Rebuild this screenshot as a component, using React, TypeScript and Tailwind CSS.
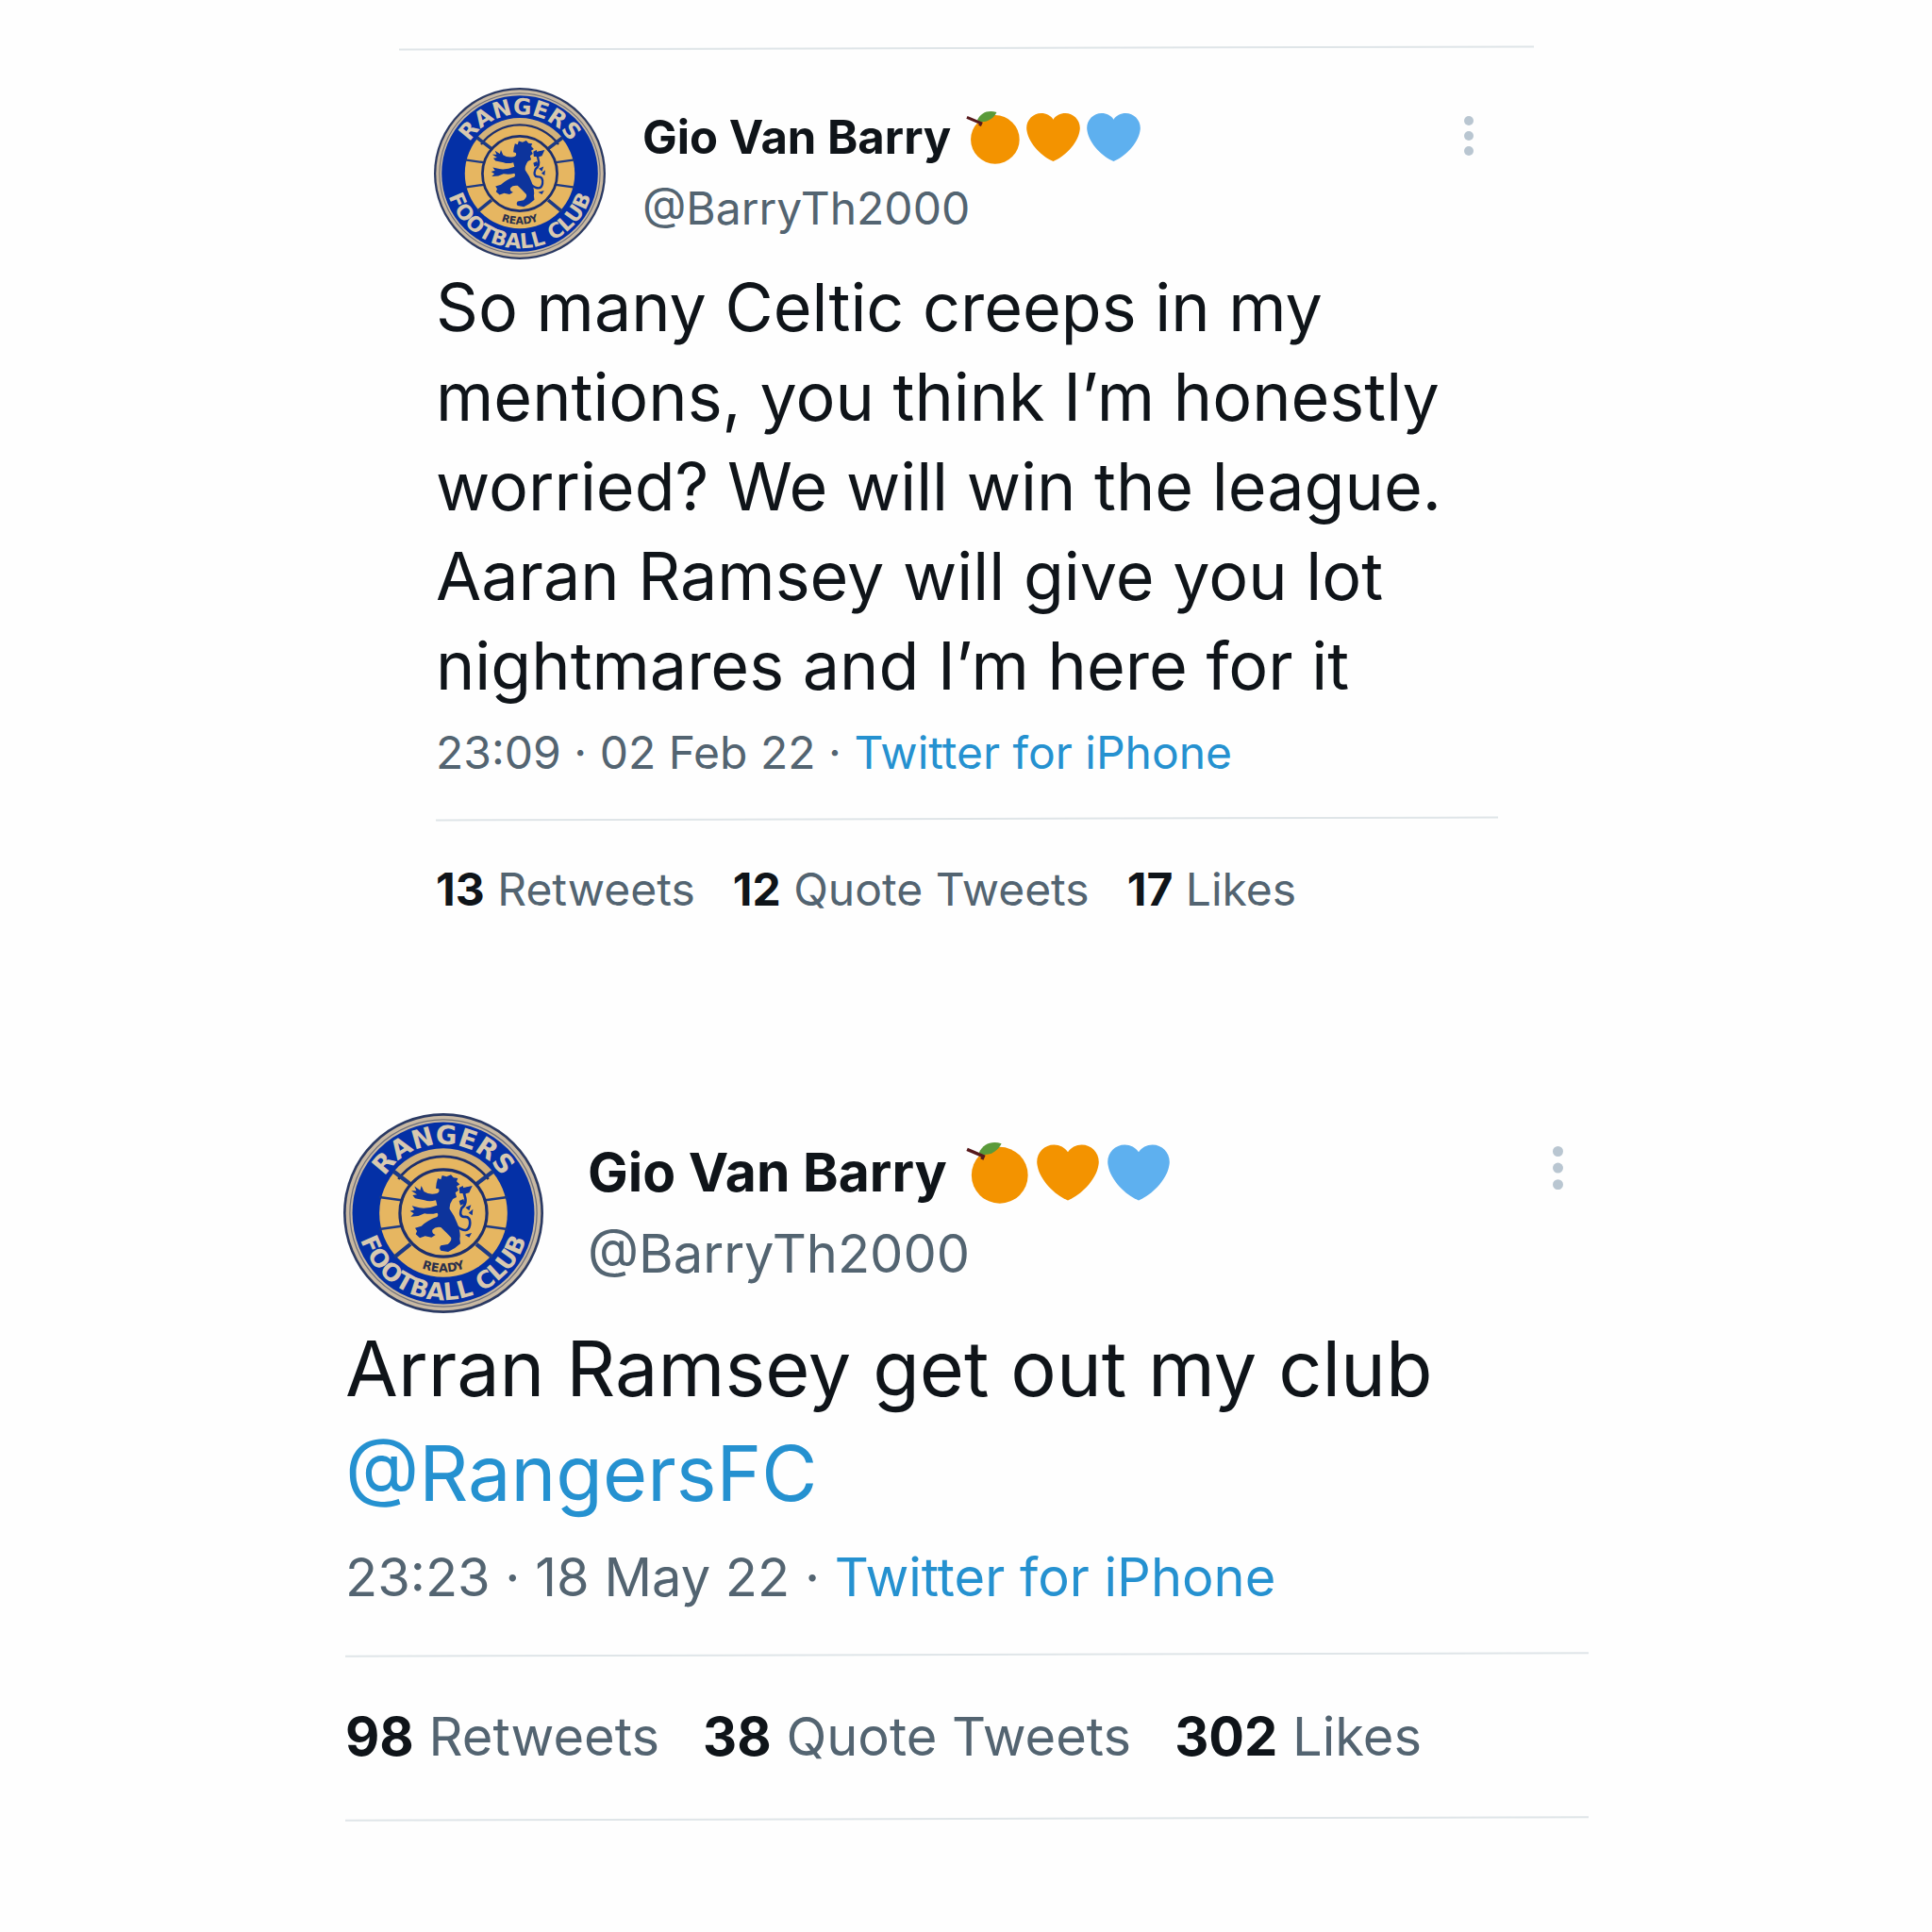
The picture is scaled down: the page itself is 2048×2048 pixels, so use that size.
import { useId } from 'react';
import clsx from 'clsx';

interface Tweet {
  name: string;
  handle: string;
  text: string[];
  mention?: string;
  time: string;
  source: string;
  stats: { count: number; label: string }[];
}

const tweets: Tweet[] = [
  {
    name: 'Gio Van Barry',
    handle: '@BarryTh2000',
    text: [
      'So many Celtic creeps in my',
      'mentions, you think I’m honestly',
      'worried? We will win the league.',
      'Aaran Ramsey will give you lot',
      'nightmares and I’m here for it',
    ],
    time: '23:09 · 02 Feb 22',
    source: 'Twitter for iPhone',
    stats: [
      { count: 13, label: 'Retweets' },
      { count: 12, label: 'Quote Tweets' },
      { count: 17, label: 'Likes' },
    ],
  },
  {
    name: 'Gio Van Barry',
    handle: '@BarryTh2000',
    text: ['Arran Ramsey get out my club'],
    mention: '@RangersFC',
    time: '23:23 · 18 May 22',
    source: 'Twitter for iPhone',
    stats: [
      { count: 98, label: 'Retweets' },
      { count: 38, label: 'Quote Tweets' },
      { count: 302, label: 'Likes' },
    ],
  },
];

function Crest({ className }: { className?: string }) {
  const id = useId();
  return (
    <svg viewBox="0 0 200 200" className={className} role="img" aria-label="Rangers Football Club">
      <defs>
        <path id={`${id}-top`} d="M31 100a69 69 0 0 1 138 0" />
        <path id={`${id}-bottom`} d="M13 100a87 87 0 0 0 174 0" />
        <path id={`${id}-motto`} d="M40 99a60 60 0 0 0 120 0" />
      </defs>

      {/* rim */}
      <circle cx="100" cy="100" r="100" fill="#2b3a63" />
      <circle cx="100" cy="100" r="97.5" fill="#c9b9a3" />
      <circle cx="100" cy="100" r="93.5" fill="none" stroke="#6f7079" strokeWidth="1.2" />
      <circle cx="100" cy="100" r="91" fill="#0430a6" />

      {/* ball panels */}
      <circle cx="100" cy="100" r="64" fill="#e6b661" />
      <path d="M54 59.500a61 61 0 0 1 92 0" fill="none" stroke="#d3b27a" strokeWidth="7" />
      <path d="M55 66a56 56 0 0 1 90 0" fill="none" stroke="#1c2f6e" strokeWidth="2.500" />
      <g stroke="#1c3a86" strokeWidth="2.500">
        <path d="M58 87l-22-3M142 87l22-3M58 113l-22 3M142 113l22 3" />
        <path d="M67 71L50 58M133 71l17-13M67 131l-16 13M133 131l16 13" strokeWidth="4" />
      </g>
      <circle cx="100" cy="100" r="43.500" fill="#e6b661" stroke="#1c2f6e" strokeWidth="3" />

      {/* lion rampant */}
      <g transform="translate(-13.200 -14.200) scale(.3145)" fill="#0d349c">
        <path d="M338 268l4-16 10 4 4-13 14 4 14-6 8 9 14 2-4 10 10 10-10 6 6 12-10 8 4 14-12 6q-12 17-10 32 16 22 24 45 12 30 8 50l2 15q-19 18-39 26l-23-4q-7-8 0-16l22-4q14-12 10-22-14-15-32-32-17-3-27 8-3 12 10 16l-13 8-20-4-17 6-13-12 4-10-6-10 20-6q20-19 50-29 6-7 0-13-20 6-40 2l-20 8-24 2 10-10-12-8 14-4-8-12 24 6q26 4 56-8l-4-16q-21 6-36 0l-30-6-8-10 14-2-18-12 16 0-6-14 18 12 4-14 8 18q17 12 42 6 10-4 5-14l-9-2z" />
        <path d="M402 405q36 26 42-4 4-28-18-26-18-2-8-28 18-14 10-38-6-16 10-26" fill="none" stroke="#0d349c" strokeWidth="8" />
        <path d="M452 276l-10 22-20 6 2-22zM412 300l-2-18 12-6 6 24zM424 318l-14 6 4 14 14-6zM430 345l18-8-6 18zM428 432l22-6-8 14zM440 362l14-12-2 20z" />
      </g>

      <g fontFamily="DejaVu Sans, sans-serif" fontWeight="700" textAnchor="middle">
        <text fontSize="26" fill="#d8c9b0">
          <textPath href={`#${id}-top`} startOffset="50%">RANGERS</textPath>
        </text>
        <text fontSize="24" fill="#d8c9b0">
          <textPath href={`#${id}-bottom`} startOffset="50%">FOOTBALL CLUB</textPath>
        </text>
        <text fontSize="12" fill="#2a2f4c">
          <textPath href={`#${id}-motto`} startOffset="50%">READY</textPath>
        </text>
      </g>
    </svg>
  );
}

function Tangerine({ className }: { className?: string }) {
  return (
    <svg viewBox="0 0 36 36" className={className} role="img" aria-label="tangerine">
      <circle cx="19.500" cy="19.500" r="16.300" fill="#f39300" />
      <path d="M7.500 6.500C10 1.500 14.500-.5 20.500 1.200c-2 4.300-6.500 7-11.500 6.300z" fill="#5a9a3a" />
      <path d="M.6 4.600l9.400 4-.8 1.800" fill="none" stroke="#57191c" strokeWidth="1.900" />
    </svg>
  );
}

function Heart({ className }: { className?: string }) {
  return (
    <svg viewBox="0 0 36 36" className={className} role="img" aria-label="heart">
      <path
        fill="currentColor"
        d="M35.885 11.833c0-5.450-4.418-9.868-9.867-9.868-3.308 0-6.227 1.633-8.018 4.129-1.791-2.496-4.710-4.129-8.017-4.129-5.450 0-9.868 4.417-9.868 9.868 0 .772.098 1.520.266 2.241C1.751 22.587 11.216 31.568 18 34.034c6.783-2.466 16.249-11.447 17.617-19.959.170-.721.268-1.469.268-2.242z"
      />
    </svg>
  );
}

function MoreIcon({ className }: { className?: string }) {
  return (
    <svg viewBox="0 0 10 42" className={className} fill="#b9c6d1">
      <circle cx="5" cy="5" r="5" />
      <circle cx="5" cy="21" r="5" />
      <circle cx="5" cy="37" r="5" />
    </svg>
  );
}

function Rule({ className }: { className?: string }) {
  return <hr className={clsx('h-[2px] border-0 bg-[#dfe5e8] -rotate-[0.15deg]', className)} />;
}

function TweetCard({ tweet, large }: { tweet: Tweet; large?: boolean }) {
  const emoji = large ? 'size-[66px]' : 'size-[57px]';
  const small = large ? 'text-[56px] leading-[70px]' : 'text-[48px] leading-[60px]';

  return (
    <article className={clsx('mx-auto w-full', large ? 'max-w-[1320px]' : 'max-w-[1128px]')}>
      <header className="flex items-start">
        <Crest className={clsx('shrink-0', large ? 'size-[212px]' : 'size-[182px]')} />
        <div
          className={clsx(
            large ? 'ml-[47px] pt-[20px] text-[56px] leading-[86px]' : 'ml-[39px] pt-[15px] text-[48px] leading-[75px]',
          )}
        >
          <div className={clsx('flex items-center', large ? 'gap-[9px]' : 'gap-[7px]')}>
            <h2 className={clsx('font-bold', large ? 'mr-[11px] text-[57px]' : 'mr-[9px] text-[49px]')}>{tweet.name}</h2>
            <Tangerine className={emoji} />
            <Heart className={clsx('text-[#f39300]', emoji)} />
            <Heart className={clsx('text-[#5eb0ef]', emoji)} />
          </div>
          <p className="text-[#536471]">{tweet.handle}</p>
        </div>
        <button type="button" aria-label="More" className={clsx('ml-auto', large ? 'mt-[35px] mr-[27px]' : 'mt-[30px] mr-[26px]')}>
          <MoreIcon className={large ? 'w-[11px]' : 'w-[10px]'} />
        </button>
      </header>

      <div className="pl-[2px]">
        <p className={large ? 'mt-[4px] text-[81px] leading-[111px]' : 'mt-[3px] text-[70px] leading-[95px]'}>
          {tweet.text.map((line) => (
            <span key={line} className="block">{line}</span>
          ))}
          {tweet.mention && <a href="#" className="text-[#2591d0]">{tweet.mention}</a>}
        </p>

        <p className={clsx('text-[#536471]', small, large ? 'mt-[19px]' : 'mt-[15px]')}>
          {tweet.time} · <a href="#" className="text-[#2591d0]">{tweet.source}</a>
        </p>

        <Rule className={large ? 'mt-[46px]' : 'mt-[39px]'} />
        <ul className={clsx('flex text-[#536471]', small, large ? 'my-[51px] gap-[46px]' : 'mt-[44px] gap-[40px]')}>
          {tweet.stats.map((stat) => (
            <li key={stat.label}>
              <strong className="font-bold text-[#0f1419]">{stat.count}</strong> {stat.label}
            </li>
          ))}
        </ul>
        {large && <Rule />}
      </div>
    </article>
  );
}

export default function App() {
  return (
    <main className="min-h-screen bg-[#fefefe] pt-[50px] pb-[118px] font-['Inter',sans-serif] text-[#0f1419]">
      <Rule className="mx-auto mb-[41px] max-w-[1203px]" />
      <div className="flex flex-col gap-[207px]">
        <TweetCard tweet={tweets[0]} />
        <TweetCard tweet={tweets[1]} large />
      </div>
    </main>
  );
}
